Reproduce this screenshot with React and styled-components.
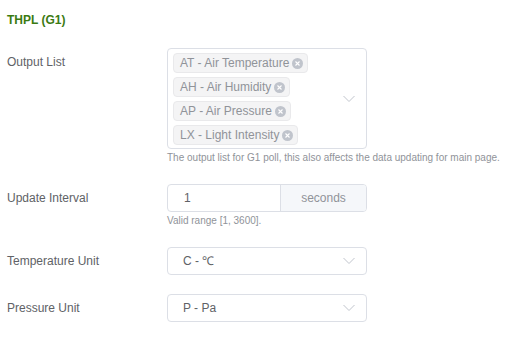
import React from 'react';
import styled, { createGlobalStyle } from 'styled-components';

const GlobalStyle = createGlobalStyle`
  body {
    margin: 0;
    background: #fff;
    font-family: "Liberation Sans", Arial, sans-serif;
  }
`;

const Panel = styled.div`
  width: 516px;
  height: 337px;
  padding: 13px 0 0 7px;
  box-sizing: border-box;
`;

const Title = styled.h3`
  margin: 0 0 21px;
  font-size: 12px;
  line-height: 14px;
  font-weight: 700;
  color: #3b7a12;
`;

const Row = styled.div`
  display: grid;
  grid-template-columns: 160px 200px;
  margin-bottom: 19px;
`;

const Label = styled.label`
  font-size: 12px;
  line-height: 28px;
  color: #606266;
`;

const Control = styled.div`
  display: flex;
  flex-direction: column;
`;

const Help = styled.div`
  margin-top: 2px;
  font-size: 10px;
  line-height: 14px;
  color: #909399;
  white-space: nowrap;
`;

const SelectBox = styled.div`
  position: relative;
  box-sizing: border-box;
  width: 200px;
  min-height: 28px;
  border: 1px solid #dcdfe6;
  border-radius: 4px;
  background: #fff;
  display: flex;
  align-items: center;
  padding: ${(p) => (p.$multi ? '2px 30px 1px 0' : '0 30px 0 15px')};
`;

const Value = styled.span`
  font-size: 12px;
  line-height: 26px;
  color: #606266;
`;

const Tags = styled.div`
  display: flex;
  flex-direction: column;
  align-items: flex-start;
`;

const Tag = styled.span`
  display: inline-flex;
  align-items: center;
  box-sizing: border-box;
  height: 20px;
  margin: 2px 0 2px 5px;
  padding: 0 4px 0 6px;
  background: #f4f4f5;
  border: 1px solid #e9e9eb;
  border-radius: 4px;
  font-size: 12px;
  color: #909399;
  white-space: nowrap;
`;

const Close = styled.span`
  display: inline-flex;
  align-items: center;
  justify-content: center;
  width: 11px;
  height: 11px;
  margin-left: 3px;
  border-radius: 50%;
  background: #c0c4cc;
`;

const Arrow = styled.span`
  position: absolute;
  right: 11px;
  top: 50%;
  transform: translateY(-50%);
  display: flex;
`;

const InputGroup = styled.div`
  display: flex;
  box-sizing: border-box;
  width: 200px;
  height: 28px;
  border: 1px solid #dcdfe6;
  border-radius: 4px;
  overflow: hidden;
`;

const Input = styled.div`
  flex: 1;
  padding-left: 16px;
  font-size: 12px;
  line-height: 26px;
  color: #606266;
`;

const Append = styled.div`
  width: 85px;
  border-left: 1px solid #dcdfe6;
  background: #f5f7fa;
  text-align: center;
  font-size: 12px;
  line-height: 26px;
  color: #909399;
`;

const Chevron = () => (
  <svg width="12" height="7" viewBox="0 0 12 7">
    <path d="M0.5 0.5 L6 6 L11.5 0.5" fill="none" stroke="#c0c4cc" strokeWidth="1" />
  </svg>
);

const CloseIcon = () => (
  <Close>
    <svg width="7" height="7" viewBox="0 0 7 7">
      <path d="M1.5 1.5 L5.5 5.5 M5.5 1.5 L1.5 5.5" stroke="#fff" strokeWidth="1.1" />
    </svg>
  </Close>
);

const outputs = [
  'AT - Air Temperature',
  'AH - Air Humidity',
  'AP - Air Pressure',
  'LX - Light Intensity',
];

const Select = ({ value }) => (
  <SelectBox>
    <Value>{value}</Value>
    <Arrow>
      <Chevron />
    </Arrow>
  </SelectBox>
);

export default function App() {
  return (
    <Panel>
      <GlobalStyle />
      <Title>THPL (G1)</Title>

      <Row>
        <Label>Output List</Label>
        <Control>
          <SelectBox $multi>
            <Tags>
              {outputs.map((o) => (
                <Tag key={o}>
                  {o}
                  <CloseIcon />
                </Tag>
              ))}
            </Tags>
            <Arrow>
              <Chevron />
            </Arrow>
          </SelectBox>
          <Help>The output list for G1 poll, this also affects the data updating for main page.</Help>
        </Control>
      </Row>

      <Row>
        <Label>Update Interval</Label>
        <Control>
          <InputGroup>
            <Input>1</Input>
            <Append>seconds</Append>
          </InputGroup>
          <Help>Valid range [1, 3600].</Help>
        </Control>
      </Row>

      <Row>
        <Label>Temperature Unit</Label>
        <Control>
          <Select value="C - ℃" />
        </Control>
      </Row>

      <Row>
        <Label>Pressure Unit</Label>
        <Control>
          <Select value="P - Pa" />
        </Control>
      </Row>
    </Panel>
  );
}
